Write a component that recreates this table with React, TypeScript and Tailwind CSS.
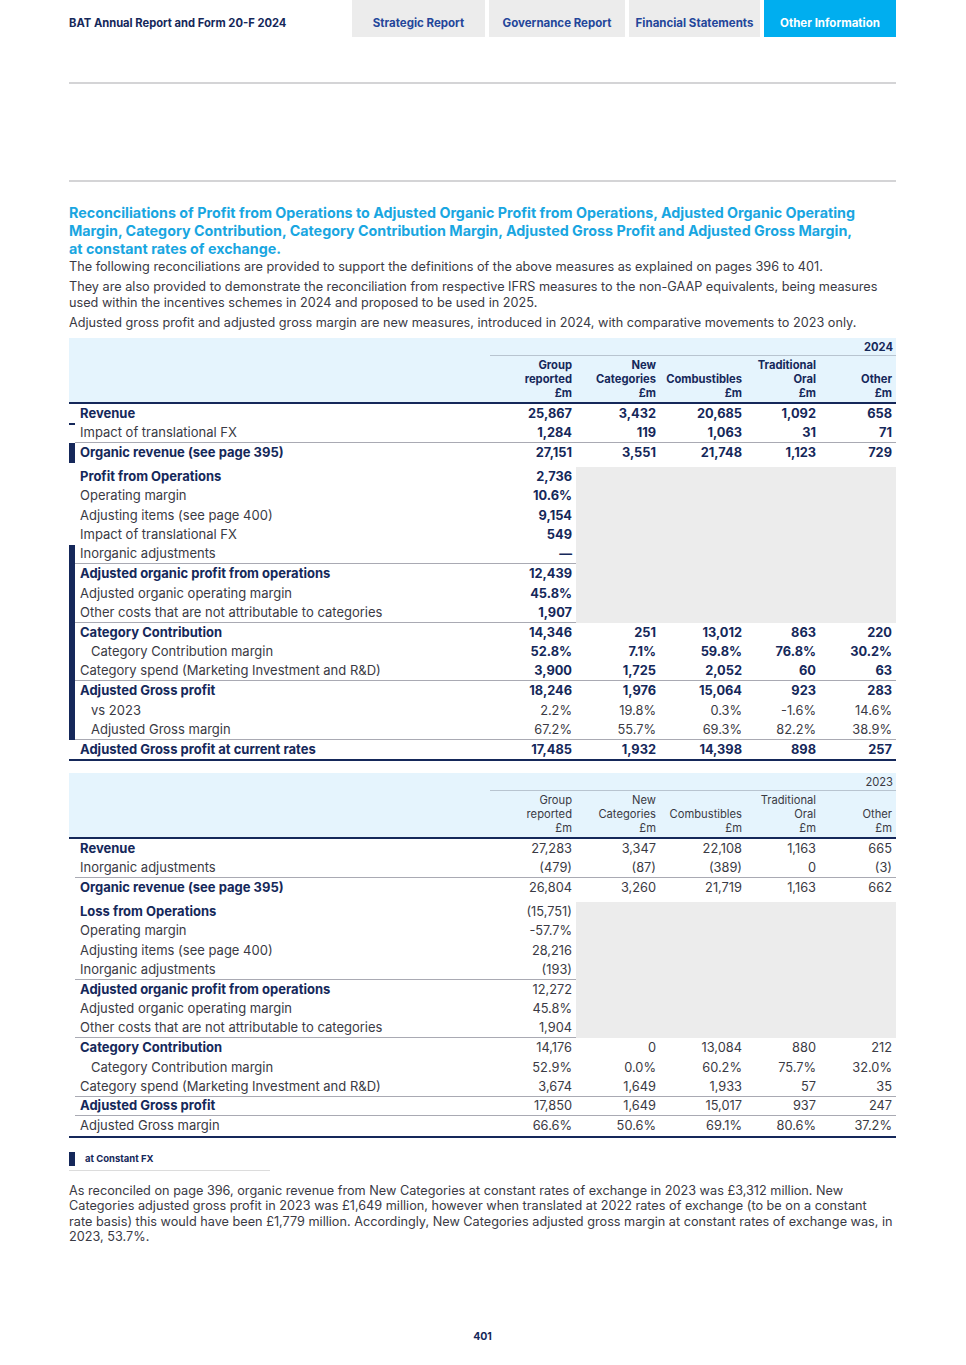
type Row = {
  label: string;
  vals: string[];
  bold?: boolean;
  regNums?: boolean;
  indent?: boolean;
  line?: boolean;
  bar?: "full" | "dash";
  gray?: number;
};

const FONT = "font-['Inter',sans-serif]";

const rows2024: (Row | "gap")[] = [
  { label: "Revenue", vals: ["25,867", "3,432", "20,685", "1,092", "658"], bold: true, bar: "dash" },
  { label: "Impact of translational FX", vals: ["1,284", "119", "1,063", "31", "71"], line: true },
  { label: "Organic revenue (see page 395)", vals: ["27,151", "3,551", "21,748", "1,123", "729"], bold: true, bar: "full" },
  "gap",
  { label: "Profit from Operations", vals: ["2,736"], bold: true, gray: 8 },
  { label: "Operating margin", vals: ["10.6%"] },
  { label: "Adjusting items (see page 400)", vals: ["9,154"] },
  { label: "Impact of translational FX", vals: ["549"] },
  { label: "Inorganic adjustments", vals: ["—"], bar: "full", line: true },
  { label: "Adjusted organic profit from operations", vals: ["12,439"], bold: true, bar: "full" },
  { label: "Adjusted organic operating margin", vals: ["45.8%"], bar: "full" },
  { label: "Other costs that are not attributable to categories", vals: ["1,907"], bar: "full", line: true },
  { label: "Category Contribution", vals: ["14,346", "251", "13,012", "863", "220"], bold: true, bar: "full" },
  { label: "Category Contribution margin", vals: ["52.8%", "7.1%", "59.8%", "76.8%", "30.2%"], indent: true, bar: "full" },
  { label: "Category spend (Marketing Investment and R&D)", vals: ["3,900", "1,725", "2,052", "60", "63"], bar: "full", line: true },
  { label: "Adjusted Gross profit", vals: ["18,246", "1,976", "15,064", "923", "283"], bold: true, bar: "full" },
  { label: "vs 2023", vals: ["2.2%", "19.8%", "0.3%", "-1.6%", "14.6%"], indent: true, regNums: true, bar: "full" },
  { label: "Adjusted Gross margin", vals: ["67.2%", "55.7%", "69.3%", "82.2%", "38.9%"], indent: true, regNums: true, bar: "full", line: true },
  { label: "Adjusted Gross profit at current rates", vals: ["17,485", "1,932", "14,398", "898", "257"], bold: true },
];

const rows2023: (Row | "gap")[] = [
  { label: "Revenue", vals: ["27,283", "3,347", "22,108", "1,163", "665"], bold: true },
  { label: "Inorganic adjustments", vals: ["(479)", "(87)", "(389)", "0", "(3)"], line: true },
  { label: "Organic revenue (see page 395)", vals: ["26,804", "3,260", "21,719", "1,163", "662"], bold: true },
  "gap",
  { label: "Loss from Operations", vals: ["(15,751)"], bold: true, gray: 7 },
  { label: "Operating margin", vals: ["-57.7%"] },
  { label: "Adjusting items (see page 400)", vals: ["28,216"] },
  { label: "Inorganic adjustments", vals: ["(193)"], line: true },
  { label: "Adjusted organic profit from operations", vals: ["12,272"], bold: true },
  { label: "Adjusted organic operating margin", vals: ["45.8%"] },
  { label: "Other costs that are not attributable to categories", vals: ["1,904"], line: true },
  { label: "Category Contribution", vals: ["14,176", "0", "13,084", "880", "212"], bold: true },
  { label: "Category Contribution margin", vals: ["52.9%", "0.0%", "60.2%", "75.7%", "32.0%"], indent: true },
  { label: "Category spend (Marketing Investment and R&D)", vals: ["3,674", "1,649", "1,933", "57", "35"], line: true },
  { label: "Adjusted Gross profit", vals: ["17,850", "1,649", "15,017", "937", "247"], bold: true, line: true },
  { label: "Adjusted Gross margin", vals: ["66.6%", "50.6%", "69.1%", "80.6%", "37.2%"] },
];

const heads = [
  ["Group", "reported", "£m"],
  ["New", "Categories", "£m"],
  ["Combustibles", "£m"],
  ["Traditional", "Oral", "£m"],
  ["Other", "£m"],
];

function RecTable({ year, rows, boldNums }: { year: string; rows: (Row | "gap")[]; boldNums: boolean }) {
  const numW = boldNums ? "font-bold text-[#15285a]" : "font-normal text-[#3a3a44]";
  const headW = boldNums ? "font-bold text-[#15285a]" : "text-[#3a3a44]";
  return (
    <div className="grid grid-cols-[6px_415px_86px_84px_86px_74px_76px]">
      {/* header */}
      <div className="col-span-7 bg-[#e5f4fd] grid grid-cols-[421px_406px]">
        <div />
        <div className={`h-[18px] border-b border-[#b8c4d0] text-right pr-[3px] text-[11.2px] leading-[18px] ${headW}`}>
          {year}
        </div>
        <div className="h-[46px]" />
        <div className="grid grid-cols-[86px_84px_86px_74px_76px] items-end pb-[2px]">
          {heads.map((h, i) => (
            <div key={i} className={`text-right pr-[4px] text-[11.2px] leading-[14px] ${headW}`}>
              {h.map((t) => (
                <div key={t}>{t}</div>
              ))}
            </div>
          ))}
        </div>
      </div>
      <div className="col-span-7 h-[2px] bg-[#15285a]" />
      {rows.map((r, i) => {
        if (r === "gap") return <div key={i} className="col-span-7 h-[4px]" />;
        const ln = r.line ? "border-b border-[#a9aab3]" : "";
        const nw = r.regNums ? "font-normal text-[#3a3a44]" : numW;
        return [
          <div key={i + "b"} className={`h-[19.5px] flex items-end ${r.bar === "full" ? "bg-[#15285a]" : ""}`}>
            {r.bar === "dash" && <div className="h-[2px] w-full bg-[#15285a] -mb-[1px]" />}
          </div>,
          <div
            key={i + "l"}
            className={`h-[19.5px] flex items-center whitespace-nowrap text-[13px] ${r.indent ? "pl-[16px]" : "pl-[5px]"} ${
              r.bold ? "font-bold text-[#15285a]" : "text-[#3a3a44]"
            } ${ln}`}
          >
            {r.label}
          </div>,
          ...r.vals.map((v, j) => (
            <div key={i + "v" + j} className={`h-[19.5px] flex items-center justify-end pr-[4px] text-[12.8px] ${nw} ${ln}`}>
              {v}
            </div>
          )),
          r.gray ? (
            <div
              key={i + "g"}
              className={`col-span-4 bg-[#ececec] ${r.gray === 8 ? "row-span-8" : "row-span-7"}`}
            />
          ) : null,
        ];
      })}
      <div className="col-span-7 h-[2px] bg-[#15285a]" />
    </div>
  );
}

export default function App() {
  return (
    <div className={`w-[966px] h-[1365px] bg-white pl-[69px] pr-[70px] ${FONT} text-[#3a3a44]`}>
      {/* top nav */}
      <div className="flex h-[37px]">
        <div className="flex-1 pt-[10px] flex items-center text-[11.2px] font-bold text-[#15285a]">
          BAT Annual Report and Form 20-F 2024
        </div>
        <div className="flex gap-[4px]">
          {["Strategic Report", "Governance Report", "Financial Statements"].map((t, i) => (
            <div
              key={t}
              className={`bg-[#ececec] flex items-center justify-center pt-[10px] text-[11.5px] font-bold text-[#24469a] ${
                ["w-[133px]", "w-[136px]", "w-[131px]"][i]
              }`}
            >
              {t}
            </div>
          ))}
          <div className="w-[132px] bg-[#00aeef] flex items-center justify-center pt-[10px] text-[11.5px] font-bold text-white">
            Other Information
          </div>
        </div>
      </div>

      <div className="mt-[45px] h-[2px] bg-[#d4d4d6]" />
      <div className="mt-[96px] h-[2px] bg-[#d4d4d6]" />

      {/* intro */}
      <h2 className="mt-[22px] text-[14.3px] leading-[18px] font-bold text-[#19a6e1] whitespace-nowrap">
        <span className="block">
          Reconciliations of Profit from Operations to Adjusted Organic Profit from Operations, Adjusted Organic Operating
        </span>
        <span className="block">
          Margin, Category Contribution, Category Contribution Margin, Adjusted Gross Profit and Adjusted Gross Margin,
        </span>
        <span className="block">at constant rates of exchange.</span>
      </h2>
      <div className="text-[12.7px] leading-[16px] flex flex-col gap-[4px] mt-[1px]">
        <p>
          The following reconciliations are provided to support the definitions of the above measures as explained on
          pages 396 to 401.
        </p>
        <p>
          They are also provided to demonstrate the reconciliation from respective IFRS measures to the non-GAAP
          equivalents, being measures used within the incentives schemes in 2024 and proposed to be used in 2025.
        </p>
        <p>
          Adjusted gross profit and adjusted gross margin are new measures, introduced in 2024, with comparative
          movements to 2023 only.
        </p>
      </div>

      <div className="mt-[7px]">
        <RecTable year="2024" rows={rows2024} boldNums />
      </div>
      <div className="mt-[12px]">
        <RecTable year="2023" rows={rows2023} boldNums={false} />
      </div>

      {/* legend */}
      <div className="mt-[14px] w-[201px] border-b border-[#dcdcdc] pb-[4px] flex items-center gap-[10px]">
        <div className="w-[6px] h-[14px] bg-[#15285a]" />
        <span className="text-[9.5px] font-bold text-[#15285a]">at Constant FX</span>
      </div>

      <p className="mt-[12px] text-[12.7px] leading-[15.5px]">
        <span className="block">
          As reconciled on page 396, organic revenue from New Categories at constant rates of exchange in 2023 was
          £3,312 million. New
        </span>
        <span className="block">
          Categories adjusted gross profit in 2023 was £1,649 million, however when translated at 2022 rates of
          exchange (to be on a constant
        </span>
        <span className="block">
          rate basis) this would have been £1,779 million. Accordingly, New Categories adjusted gross margin at
          constant rates of exchange was, in
        </span>
        <span className="block">2023, 53.7%.</span>
      </p>

      <div className="mt-[84px] text-center text-[10.5px] font-bold text-[#15285a]">401</div>
    </div>
  );
}
